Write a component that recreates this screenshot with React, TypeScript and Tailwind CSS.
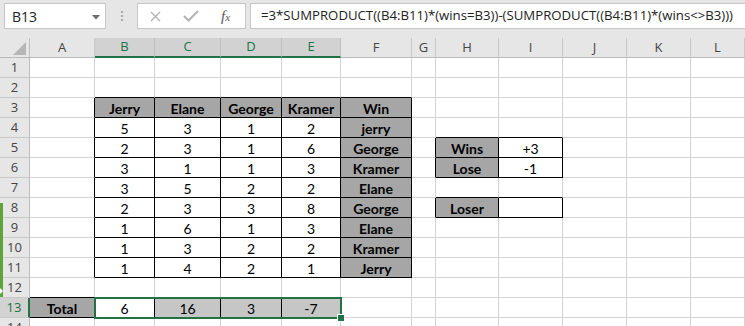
import clsx from "clsx";

const COLS = ["A", "B", "C", "D", "E", "F", "G", "H", "I", "J", "K", "L"];
const SELECTED_COLS = ["B", "C", "D", "E"];
const ROWS = [1, 2, 3, 4, 5, 6, 7, 8, 9, 10, 11, 12, 13, 14];

type Cell = { v: string; bold?: boolean; fill?: "gray" | "sel" };

const cells: Record<string, Cell> = {
  B3: { v: "Jerry", bold: true, fill: "gray" },
  C3: { v: "Elane", bold: true, fill: "gray" },
  D3: { v: "George", bold: true, fill: "gray" },
  E3: { v: "Kramer", bold: true, fill: "gray" },
  F3: { v: "Win", bold: true, fill: "gray" },
  H5: { v: "Wins", bold: true, fill: "gray" },
  I5: { v: "+3" },
  H6: { v: "Lose", bold: true, fill: "gray" },
  I6: { v: "-1" },
  H8: { v: "Loser", bold: true, fill: "gray" },
  A13: { v: "Total", bold: true, fill: "gray" },
  B13: { v: "6" },
  C13: { v: "16", fill: "sel" },
  D13: { v: "3", fill: "sel" },
  E13: { v: "-7", fill: "sel" },
};

const scores = [
  ["5", "3", "1", "2", "jerry"],
  ["2", "3", "1", "6", "George"],
  ["3", "1", "1", "3", "Kramer"],
  ["3", "5", "2", "2", "Elane"],
  ["2", "3", "3", "8", "George"],
  ["1", "6", "1", "3", "Elane"],
  ["1", "3", "2", "2", "Kramer"],
  ["1", "4", "2", "1", "Jerry"],
];

scores.forEach((row, i) => {
  row.forEach((v, j) => {
    const key = COLS[j + 1] + (i + 4);
    cells[key] = j === 4 ? { v, bold: true, fill: "gray" } : { v };
  });
});

function isBoxed(r: number, c: number) {
  if (r >= 3 && r <= 11 && c >= 1 && c <= 5) return true;
  if ((r === 5 || r === 6 || r === 8) && (c === 7 || c === 8)) return true;
  if (r === 13 && c >= 0 && c <= 4) return true;
  return false;
}

function SheetCell({ r, c }: { r: number; c: number }) {
  const cell = cells[COLS[c] + r];
  const right = isBoxed(r, c) || isBoxed(r, c + 1);
  const bottom = isBoxed(r, c) || isBoxed(r + 1, c);
  return (
    <div
      className={clsx(
        "h-5 overflow-hidden whitespace-nowrap border-r border-b pt-[2px] text-center font-['Lato',sans-serif] text-[14px] leading-[17px] text-black",
        right ? "border-r-black" : "border-r-[#d4d4d4]",
        bottom ? "border-b-black" : "border-b-[#d4d4d4]",
        cell?.bold && "font-bold",
        cell?.fill === "gray"
          ? "bg-[#a6a6a6]"
          : cell?.fill === "sel"
            ? "bg-[#c6c6c6]"
            : "bg-white",
      )}
    >
      {cell?.v}
    </div>
  );
}

function FormulaBar() {
  return (
    <div className="flex h-[38px] items-start bg-[#e6e6e6] pt-[3px] pl-1">
      <div className="relative flex h-[26px] w-[102px] items-center border border-[#c6c6c6] bg-white pl-[7px] text-[14px] text-[#222]">
        B13
        <svg className="absolute top-[11px] right-[5px]" width="8" height="5" viewBox="0 0 8 5">
          <path d="M0 0 H8 L4 4.5 Z" fill="#6b6b6b" />
        </svg>
      </div>
      <div className="flex h-[26px] w-[31px] flex-col items-center justify-center gap-[2px]">
        <span className="h-[2px] w-[2px] bg-[#a8a8a8]" />
        <span className="h-[2px] w-[2px] bg-[#a8a8a8]" />
        <span className="h-[2px] w-[2px] bg-[#a8a8a8]" />
      </div>
      <div className="flex h-[26px] w-[109px] items-center border border-[#c6c6c6] bg-white">
        <svg className="ml-[12px]" width="11" height="11" viewBox="0 0 11 11">
          <path d="M1 1 L10 10 M10 1 L1 10" stroke="#b3b3b3" strokeWidth="1.4" />
        </svg>
        <svg className="ml-[22px]" width="16" height="12" viewBox="0 0 16 12">
          <path d="M1 6 L5.5 10.5 L15 1" stroke="#b3b3b3" strokeWidth="2" fill="none" />
        </svg>
        <span className="ml-[22px] font-['Liberation_Serif',serif] text-[15px] leading-none text-[#555] italic">
          f<span className="text-[11px]">x</span>
        </span>
      </div>
      <div className="ml-1 flex h-[26px] flex-1 items-center border border-r-0 border-[#c6c6c6] bg-white pl-[10px] text-[13.2px] whitespace-nowrap text-[#222]">
        =3*SUMPRODUCT((B4:B11)*(wins=B3))-(SUMPRODUCT((B4:B11)*(wins&lt;&gt;B3)))
      </div>
    </div>
  );
}

export default function App() {
  return (
    <div className="h-[326px] w-[745px] overflow-hidden bg-white font-['Open_Sans',sans-serif]">
      <FormulaBar />
      <div className="relative grid grid-cols-[30px_65px_60px_66px_61px_59px_71px_24px_63px_64px_64px_64px_54px]">
        <div className="relative h-5 border-r border-b border-r-[#c0c0c0] border-b-[#b9b9b9] bg-[#e6e6e6]">
          <svg className="absolute right-[3px] bottom-[2px]" width="13" height="13" viewBox="0 0 13 13">
            <path d="M13 0 V13 H0 Z" fill="#b6b6b6" />
          </svg>
        </div>
        {COLS.map((col) =>
          SELECTED_COLS.includes(col) ? (
            <div
              key={col}
              className="flex h-5 items-center justify-center border-r border-b-2 border-r-[#bdbdbd] border-b-[#217346] bg-[#d2d2d2] text-[13px] text-[#217346]"
            >
              {col}
            </div>
          ) : (
            <div
              key={col}
              className="flex h-5 items-center justify-center border-r border-b border-r-[#c8c8c8] border-b-[#b9b9b9] bg-[#e6e6e6] text-[13px] text-[#444]"
            >
              {col}
            </div>
          ),
        )}

        {ROWS.map((r) => (
          <div key={r} className="contents">
            {r === 13 ? (
              <div className="flex h-5 items-center justify-center border-r-2 border-b border-r-[#217346] border-b-[#c8c8c8] bg-[#d2d2d2] text-[13px] text-[#217346]">
                {r}
              </div>
            ) : (
              <div className="flex h-5 items-center justify-center border-r border-b border-r-[#bdbdbd] border-b-[#c8c8c8] bg-[#e6e6e6] text-[13px] text-[#444]">
                {r}
              </div>
            )}
            {COLS.map((_, c) => (
              <SheetCell key={c} r={r} c={c} />
            ))}
          </div>
        ))}

        {/* selection around B13:E13 */}
        <div className="pointer-events-none absolute top-[259px] left-[94px] h-[22px] w-[248px] border-2 border-[#217346]" />
        <div className="absolute top-[276px] left-[337px] h-2 w-2 border border-white bg-[#217346]" />

        {/* green tab on the left edge */}
        <div className="absolute top-[165px] left-0 h-[94px] w-[3px] bg-[#5fa33b]">
          <div className="absolute top-[85px] left-0 h-0 w-0 border-y-[3px] border-l-[3px] border-y-transparent border-l-white" />
        </div>
      </div>
    </div>
  );
}
